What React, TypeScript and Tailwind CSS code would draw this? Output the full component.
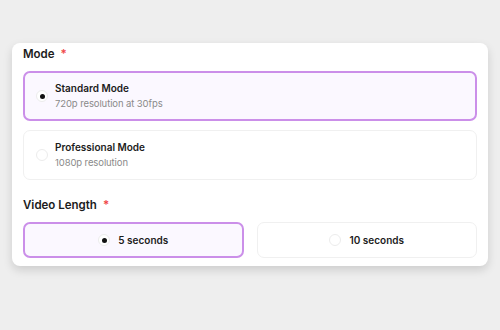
import React from "react";

function Radio({ checked }: { checked: boolean }) {
  return (
    <span className="flex h-3 w-3 flex-shrink-0 items-center justify-center rounded-full border border-[#ececec] bg-white">
      {checked && <span className="h-[5px] w-[5px] rounded-full bg-[#111]" />}
    </span>
  );
}

export default function App() {
  return (
    <div
      className="h-[330px] w-[500px] bg-[#eeeeee] pt-[43px] pl-3"
      style={{ fontFamily: "Inter, 'Liberation Sans', sans-serif" }}
    >
      <div className="w-[476px] rounded-lg bg-white px-[11px] pt-[3px] pb-2 shadow-[0_4px_10px_rgba(0,0,0,0.14)]">
        {/* Mode */}
        <div className="flex h-[18px] items-center text-[11.5px] font-semibold text-[#1c1c1c]">
          Mode <span className="ml-[6px] text-[#ef4444]">*</span>
        </div>
        <div className="mt-[7px] flex flex-col gap-[9px]">
          <div className="flex h-[50px] items-center gap-[7px] rounded-[7px] border-2 border-[#cb8fe9] bg-[#fbf8ff] pl-[11px]">
            <Radio checked />
            <div className="flex flex-col gap-[2px]">
              <span className="text-[10px] font-semibold leading-[13px] text-[#1c1c1c]">Standard Mode</span>
              <span className="text-[9.5px] leading-[13px] tracking-[-0.1px] text-[#8a8a8a]">720p resolution at 30fps</span>
            </div>
          </div>
          <div className="flex h-[50px] items-center gap-[7px] rounded-[7px] border border-[#f0f0f0] bg-white pl-3">
            <Radio checked={false} />
            <div className="flex flex-col gap-[2px]">
              <span className="text-[10px] font-semibold leading-[13px] text-[#1c1c1c]">Professional Mode</span>
              <span className="text-[9.5px] leading-[13px] tracking-[-0.1px] text-[#8a8a8a]">1080p resolution</span>
            </div>
          </div>
        </div>

        {/* Video Length */}
        <div className="mt-[17px] flex h-[18px] items-center text-[11.5px] font-semibold text-[#1c1c1c]">
          Video Length <span className="ml-[6px] text-[#ef4444]">*</span>
        </div>
        <div className="mt-[7px] grid grid-cols-2 gap-[13px]">
          <div className="flex h-[36px] items-center justify-center gap-[8px] rounded-[7px] border-2 border-[#cb8fe9] bg-[#fbf8ff]">
            <Radio checked />
            <span className="text-[10px] font-semibold text-[#1c1c1c]">5 seconds</span>
          </div>
          <div className="flex h-[36px] items-center justify-center gap-[8px] rounded-[7px] border border-[#f0f0f0] bg-white">
            <Radio checked={false} />
            <span className="text-[10px] font-semibold text-[#1c1c1c]">10 seconds</span>
          </div>
        </div>
      </div>
    </div>
  );
}
